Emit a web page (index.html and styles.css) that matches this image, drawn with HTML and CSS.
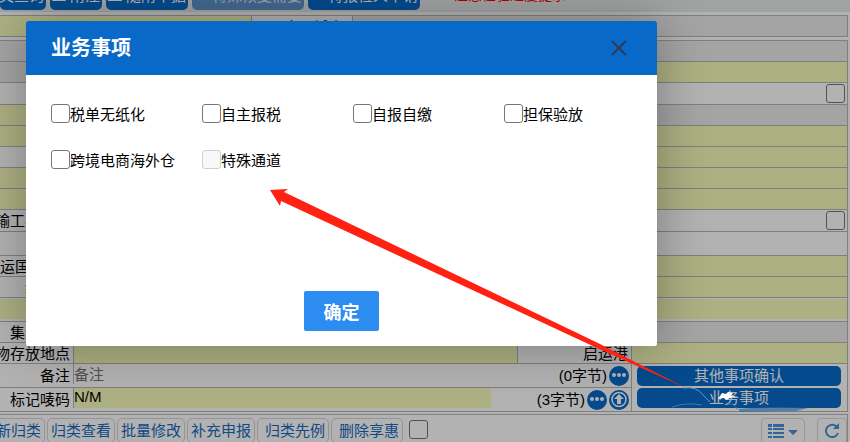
FILE: index.html
```
<!DOCTYPE html>
<html lang="zh-CN">
<head>
  <meta charset="UTF-8">
  <meta name="viewport" content="width=device-width, initial-scale=1.0">
  <title>业务事项</title>
  <link rel="stylesheet" href="styles.css">
</head>
<body>

  <div class="toolbar">
    <button type="button" class="tool">报文查询</button>
    <button type="button" class="tool">
      <svg width="14" height="14" viewBox="0 0 14 14"><rect width="14" height="14" rx="1" fill="#fff"/></svg>附注
    </button>
    <button type="button" class="tool">
      <svg width="14" height="14" viewBox="0 0 14 14"><path d="M1 1h12v12H1zM4 9l2-3 4 4" fill="none" stroke="#fff" stroke-width="2"/></svg>随附单据
    </button>
    <button type="button" class="tool" disabled>
      <svg width="14" height="14" viewBox="0 0 14 14"><path d="M3 8l4 4 4-4z" fill="#fff"/></svg>特殊恢复需要
    </button>
    <button type="button" class="tool">
      <svg width="14" height="14" viewBox="0 0 14 14"><circle cx="7" cy="7" r="5" fill="#fff"/></svg>特报检人申请
    </button>
    <span class="notice">注意检验进度提示</span>
  </div>

  <div class="form">
    <div class="row">
      <div class="cell yellow part-left"></div>
      <div class="cell label part-label">启运城市</div>
      <div class="cell gray fill"></div>
    </div>
  </div>

  <div class="form main">
    <div class="row gray"></div>
    <div class="row">
      <div class="cell gray fill"></div>
      <div class="cell yellow side"></div>
    </div>
    <div class="row check-row"><input type="checkbox" class="check" aria-label="选择"></div>
    <div class="row">
      <div class="cell yellow fill"></div>
      <div class="cell gray side"></div>
    </div>
    <div class="row yellow"></div>
    <div class="row">
      <div class="cell fill"></div>
      <div class="cell yellow side"></div>
    </div>
    <div class="row yellow"></div>
    <div class="row yellow"></div>
    <div class="row check-row">
      <div class="cell label name">运输工具名称</div>
      <input type="checkbox" class="check" aria-label="运输工具">
    </div>
    <div class="row tall"></div>
    <div class="row">
      <div class="cell label name">启运国(地区)</div>
      <div class="cell yellow fill"></div>
    </div>
    <div class="row">
      <div class="cell label name">经停港</div>
      <div class="cell yellow fill"></div>
    </div>
    <div class="row inset"><div class="cell yellow fill"></div></div>
    <div class="row">
      <div class="cell label name">集装箱数</div>
      <div class="cell gray fill"></div>
    </div>
    <div class="row">
      <div class="cell label name">货物存放地点</div>
      <div class="cell yellow fill"></div>
      <div class="cell label port">启运港</div>
      <div class="cell yellow side"></div>
    </div>
    <div class="bottom">
      <div class="notes">
        <div class="note">
          <label class="cell label name" for="remark">备注</label>
          <input type="text" class="text" id="remark" placeholder="备注">
          <span class="count">(0字节)</span>
          <button type="button" class="round" aria-label="更多">
            <svg width="20" height="20" viewBox="0 0 20 20"><g fill="#fff"><circle cx="5" cy="9" r="2"/><circle cx="10" cy="9" r="2"/><circle cx="15" cy="9" r="2"/></g></svg>
          </button>
        </div>
        <div class="note">
          <label class="cell label name" for="mark">标记唛码</label>
          <input type="text" class="text marked" id="mark" value="N/M">
          <span class="count">(3字节)</span>
          <button type="button" class="round" aria-label="更多">
            <svg width="20" height="20" viewBox="0 0 20 20"><g fill="#fff"><circle cx="5" cy="9" r="2"/><circle cx="10" cy="9" r="2"/><circle cx="15" cy="9" r="2"/></g></svg>
          </button>
          <button type="button" class="round" aria-label="上传">
            <svg width="20" height="20" viewBox="0 0 20 20"><circle cx="10" cy="9.500" r="7" fill="none" stroke="#fff" stroke-width="1.500"/><path d="M10 4l5 5h-3v5H8V9H5z" fill="#fff"/></svg>
          </button>
        </div>
      </div>
      <div class="actions">
        <button type="button" class="action">其他事项确认</button>
        <button type="button" class="action">业务事项</button>
      </div>
    </div>
  </div>

  <div class="list">
    <button type="button" class="link-btn first">重新归类</button>
    <button type="button" class="link-btn">归类查看</button>
    <button type="button" class="link-btn">批量修改</button>
    <button type="button" class="link-btn">补充申报</button>
    <button type="button" class="link-btn wide">归类先例</button>
    <button type="button" class="link-btn wide">删除享惠</button>
    <input type="checkbox" class="check" aria-label="享惠">
    <button type="button" class="icon-btn columns" aria-label="列">
      <svg width="30" height="16" viewBox="0 0 30 16"><path d="M0 1h4v3H0zM0 5h4v2H0zM0 9h4v2H0zM0 13h4v2H0zM5 1h11v3H5zM5 5h11v2H5zM5 9h11v2H5zM5 13h11v2H5zM20 7h10l-5 5z" fill="#4a90dc"/></svg>
    </button>
    <button type="button" class="icon-btn" aria-label="刷新">
      <svg width="16" height="16" viewBox="0 0 16 16"><path d="M13 4a6.200 6.200 0 1 0 1 6" fill="none" stroke="#4a90dc" stroke-width="2"/><path d="M15 0v6H9z" fill="#4a90dc"/></svg>
    </button>
  </div>

  <div class="shade"></div>

  <div class="dialog" role="dialog" aria-labelledby="dialogTitle">
    <div class="dialog-head">
      <h2 class="dialog-title" id="dialogTitle">业务事项</h2>
      <button type="button" class="close" aria-label="关闭">
        <svg width="16" height="16" viewBox="0 0 16 16"><path d="M1 1l14 14M15 1L1 15" stroke="#2e3a55" stroke-width="2"/></svg>
      </button>
    </div>
    <div class="options">
      <label class="option"><input type="checkbox" class="check">税单无纸化</label>
      <label class="option"><input type="checkbox" class="check">自主报税</label>
      <label class="option"><input type="checkbox" class="check">自报自缴</label>
      <label class="option"><input type="checkbox" class="check">担保验放</label>
      <label class="option"><input type="checkbox" class="check">跨境电商海外仓</label>
      <label class="option"><input type="checkbox" class="check" disabled>特殊通道</label>
    </div>
    <button type="button" class="confirm">确定</button>
  </div>

  <svg class="arrow" width="850" height="442" viewBox="0 0 850 442">
    <path d="M738 409q30-3 70-1l-12 3-56 1z" fill="#2f6ba6" opacity=".7"/>
    <path d="M683 388q14-2 20 7l7 7" fill="none" stroke="#6b93bb"/>
    <path d="M672 407q14-5 30-2M728 404q6-1 9 5" fill="none" stroke="#3f78b0"/>
    <path d="M718 399l4-6 4 1 2-2 5 1-2 3 6 1-7 1-4 2-2-2z" fill="#fff"/>
    <path d="M270 190l18-1-4 3 316 152 86 44-89-40L281 201l-1 5z" fill="#ff2213"/>
  </svg>

</body>
</html>
```
FILE: styles.css
```
* {
  box-sizing: border-box;
}

body {
  margin: 0;
  height: 100vh;
  overflow: hidden;
  background-color: #fff;
  color: #000;
  font-family: "Liberation Sans", "Noto Sans CJK SC", sans-serif;
  font-size: 15px;
}

button,
input {
  font-family: inherit;
  font-size: 15px;
}

/* top bar, scrolled almost out of view */
.toolbar {
  display: flex;
  align-items: flex-end;
  gap: 4px;
  height: 12px;
  margin-bottom: 3px;
  padding-bottom: 2px;
  background-color: #e5eaea;
}

.tool {
  display: flex;
  flex-shrink: 0;
  align-items: center;
  gap: 4px;
  height: 28px;
  padding: 0 2px 4px;
  border: none;
  border-radius: 5px;
  background-color: #066bc9;
  color: #fff;
  white-space: nowrap;
}

.tool:first-child {
  width: 46px;
  justify-content: flex-end;
}

.tool:disabled {
  background-color: #5f96cd;
  color: #dde8f4;
}

.notice {
  margin-left: 30px;
  padding-bottom: 4px;
  color: #f00;
  font-size: 14px;
  line-height: 22px;
  white-space: nowrap;
}

.form {
  margin: 0 2px 3px 0;
  border: 1px solid #b7b7b7;
  border-left: none;
  border-bottom: none;
}

.main {
  margin-bottom: 2px;
}

.row {
  display: flex;
  height: 21px;
  border-bottom: 1px solid #b7b7b7;
}

.check-row {
  height: 22px;
  align-items: center;
  padding-right: 2px;
}

.tall {
  height: 24px;
}

.inset {
  height: 24px;
  padding: 1px 0 2px;
}

.yellow {
  background-color: #f8fcbb;
}

.gray {
  background-color: #ebebeb;
}

.cell + .cell {
  border-left: 1px solid #b7b7b7;
}

.fill {
  flex: 1;
}

.side {
  width: 216px;
}

.part-left {
  width: 251px;
}

.label {
  display: flex;
  align-items: center;
  justify-content: flex-end;
  overflow: hidden;
  padding-right: 3px;
  white-space: nowrap;
}

.part-label {
  width: 101px;
  padding-right: 8px;
}

.name {
  flex-shrink: 0;
  width: 73px;
  padding-bottom: 2px;
}

.port {
  width: 114px;
  padding-bottom: 2px;
}

.check {
  appearance: none;
  flex-shrink: 0;
  width: 19px;
  height: 19px;
  margin: 0;
  border: 1px solid #767676;
  border-radius: 3px;
  background-color: #fff;
}

.check-row .check {
  margin-left: auto;
}

.check:disabled {
  border-color: #d0d0d0;
  background-color: #f8f8f8;
}

.bottom {
  display: flex;
  border-bottom: 1px solid #b7b7b7;
}

.notes {
  flex: 1;
}

.note {
  display: flex;
  align-items: center;
  gap: 2px;
  height: 23px;
  padding-right: 2px;
}

.note + .note {
  height: 24px;
  border-top: 1px solid #b7b7b7;
}

.note .name {
  height: 100%;
}

.count {
  padding-bottom: 2px;
}

.text {
  flex: 1;
  align-self: flex-start;
  min-width: 0;
  height: 20px;
  margin-left: -2px;
  padding: 0;
  border: none;
  border-left: 1px solid #b7b7b7;
  background-color: #fff;
}

.marked {
  margin-right: 44px;
  padding-bottom: 4px;
  background-color: #f8fcbb;
}

.round {
  flex-shrink: 0;
  width: 20px;
  height: 20px;
  padding: 0;
  border: none;
  border-radius: 50%;
  background-color: #066bc9;
}

.round svg {
  display: block;
}

.actions {
  display: flex;
  flex-direction: column;
  gap: 2px;
  width: 216px;
  padding: 2px 6px 2px 5px;
  border-left: 1px solid #b7b7b7;
}

.action {
  height: 20px;
  padding: 0;
  border: none;
  border-radius: 5px;
  background-color: #066bc9;
  color: #fff;
  line-height: 20px;
}

.list {
  display: flex;
  align-items: flex-start;
  gap: 2px;
  height: 40px;
  margin-right: 2px;
  padding-top: 3px;
  border: 1px solid #b7b7b7;
  border-left: none;
}

.link-btn {
  flex-shrink: 0;
  width: 68px;
  height: 25px;
  padding: 0 0 2px;
  border: 1px solid #d4d4d4;
  border-radius: 5px;
  background-color: #fff;
  color: #1769bd;
  white-space: nowrap;
}

.first {
  display: flex;
  align-items: center;
  justify-content: flex-end;
  width: 45px;
  padding-right: 3px;
  border-left: none;
  border-radius: 0 5px 5px 0;
  overflow: hidden;
}

.wide {
  width: 72px;
  padding-left: 4px;
}

.list .check {
  margin: 2px 0 0 4px;
}

.icon-btn {
  height: 26px;
  padding: 0 6px;
  border: 1px solid #d8d8d8;
  border-radius: 4px;
  background-color: #fff;
}

.icon-btn svg {
  display: block;
}

.columns {
  margin-left: auto;
  margin-right: 10px;
}

/* dialog */
.shade {
  position: absolute;
  inset: 0;
  background-color: rgba(0, 0, 0, 0.3);
}

.dialog {
  position: absolute;
  top: 21px;
  left: 26px;
  width: 631px;
  padding-bottom: 15px;
  border-radius: 2px;
  background-color: #fff;
  box-shadow: 1px 1px 50px rgba(0, 0, 0, 0.3);
}

.dialog-head {
  display: flex;
  align-items: center;
  justify-content: space-between;
  height: 54px;
  padding: 0 30px 0 25px;
  border-radius: 2px 2px 0 0;
  background-color: #0969c8;
}

.dialog-title {
  margin: 0;
  color: #fff;
  font-size: 20px;
  line-height: 54px;
}

.close {
  padding: 0;
  border: none;
  background: none;
}

.close svg {
  display: block;
}

.options {
  display: grid;
  grid-template-columns: repeat(4, 151px);
  row-gap: 24px;
  padding: 27px 0 0 25px;
}

.option {
  display: flex;
  align-items: center;
  height: 22px;
  white-space: nowrap;
}

.confirm {
  display: block;
  width: 75px;
  height: 40px;
  margin: 121px auto 0;
  padding: 0;
  border: none;
  border-radius: 2px;
  background-color: #2d8cf0;
  color: #fff;
  font-size: 18px;
  font-weight: bold;
}

/* pointer from the button to the option */
.arrow {
  position: absolute;
  top: 0;
  left: 0;
  pointer-events: none;
}
```
